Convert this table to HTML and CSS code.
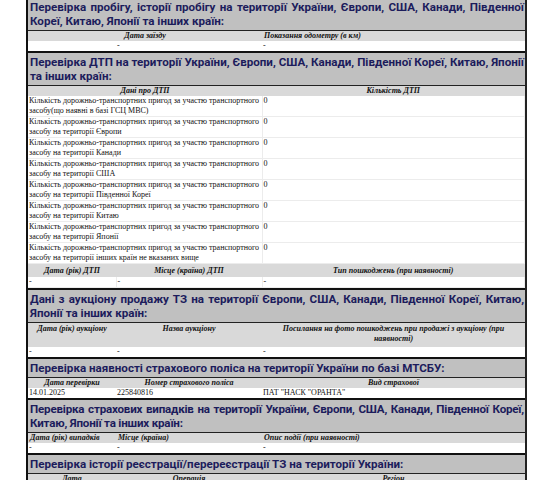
FILE: index.html
```html
<!DOCTYPE html>
<html lang="uk">
<head>
<meta charset="utf-8">
<link rel="stylesheet" href="styles.css">
</head>
<body>
<div class="doc">
  <section class="sec">
    <div class="head">Перевірка пробігу, історії пробігу на території України, Європи, США, Канади, Південної Кореї, Китаю, Японії та інших країн:</div>
    <table class="grid">
      <colgroup><col class="c1"><col class="c2"><col class="c3"></colgroup>
      <tr class="sub"><th colspan="2">Дата заїзду</th><th class="left">Показання одометру (в км)</th></tr>
      <tr class="row"><td></td><td>-</td><td>-</td></tr>
    </table>
  </section>

  <section class="sec">
    <div class="head">Перевірка ДТП на території України, Європи, США, Канади, Південної Кореї, Китаю, Японії та інших країн:</div>
    <table class="grid lines">
      <colgroup><col class="c1"><col class="c2"><col class="c3"></colgroup>
      <tr class="sub"><th colspan="2">Дані про ДТП</th><th>Кількість ДТП</th></tr>
      <tr class="row two"><td colspan="2">Кількість дорожньо-транспортних пригод за участю транспортного засобу(що наявні в базі ГСЦ МВС)</td><td>0</td></tr>
      <tr class="row two"><td colspan="2">Кількість дорожньо-транспортних пригод за участю транспортного засобу на території Європи</td><td>0</td></tr>
      <tr class="row two"><td colspan="2">Кількість дорожньо-транспортних пригод за участю транспортного засобу на території Канади</td><td>0</td></tr>
      <tr class="row two"><td colspan="2">Кількість дорожньо-транспортних пригод за участю транспортного засобу на території США</td><td>0</td></tr>
      <tr class="row two"><td colspan="2">Кількість дорожньо-транспортних пригод за участю транспортного засобу на території Південної Кореї</td><td>0</td></tr>
      <tr class="row two"><td colspan="2">Кількість дорожньо-транспортних пригод за участю транспортного засобу на території Китаю</td><td>0</td></tr>
      <tr class="row two"><td colspan="2">Кількість дорожньо-транспортних пригод за участю транспортного засобу на території Японії</td><td>0</td></tr>
      <tr class="row two"><td colspan="2">Кількість дорожньо-транспортних пригод за участю транспортного засобу на території інших країн не вказаних вище</td><td>0</td></tr>
      <tr class="sub tall"><th>Дата (рік) ДТП</th><th>Місце (країна) ДТП</th><th>Тип пошкоджень (при наявності)</th></tr>
      <tr class="row"><td>-</td><td>-</td><td>-</td></tr>
    </table>
  </section>

  <section class="sec">
    <div class="head">Дані з аукціону продажу ТЗ на території Європи, США, Канади, Південної Кореї, Китаю, Японії та інших країн:</div>
    <table class="grid">
      <colgroup><col class="c1"><col class="c2"><col class="c3"></colgroup>
      <tr class="sub top"><th>Дата (рік) аукціону</th><th>Назва аукціону</th><th>Посилання на фото пошкоджень при продажі з аукціону (при наявності)</th></tr>
      <tr class="row"><td>-</td><td>-</td><td>-</td></tr>
    </table>
  </section>

  <section class="sec">
    <div class="head">Перевірка наявності страхового полiса на території України по базі МТСБУ:</div>
    <table class="grid">
      <colgroup><col class="c1"><col class="c2"><col class="c3"></colgroup>
      <tr class="sub"><th>Дата перевірки</th><th>Номер страхового полiса</th><th>Вид страхової</th></tr>
      <tr class="row"><td>14.01.2025</td><td>225840816</td><td>ПАТ "НАСК "ОРАНТА"</td></tr>
    </table>
  </section>

  <section class="sec">
    <div class="head narrow">Перевірка страхових випадків на території України, Європи, США, Канади, Південної Кореї, Китаю, Японії та інших країн:</div>
    <table class="grid">
      <colgroup><col class="c1"><col class="c2"><col class="c3"></colgroup>
      <tr class="sub"><th class="left">Дата (рік) випадків</th><th class="left">Місце (країна)</th><th class="left">Опис події (при наявності)</th></tr>
      <tr class="row"><td>-</td><td>-</td><td>-</td></tr>
    </table>
  </section>

  <section class="sec">
    <div class="head">Перевірка історії реєстрації/перереєстрації ТЗ на території України:</div>
    <table class="grid">
      <colgroup><col class="c1"><col class="c2"><col class="c3"></colgroup>
      <tr class="sub"><th>Дата</th><th>Операція</th><th>Регіон</th></tr>
    </table>
  </section>
</div>
</body>
</html>
```
FILE: styles.css
```css
html, body {
  margin: 0;
  padding: 0;
  background: #ffffff;
}

.doc {
  width: 501px;
  margin: -2px 0 0 26px;
  border-left: 2px solid #111;
  border-right: 2px solid #222;
  box-sizing: border-box;
}

.sec {
  border-bottom: 2px solid #111;
}

.head {
  background: #c0c0c0;
  color: #1c1c5c;
  font-family: Roboto, "Liberation Sans", Arial, sans-serif;
  font-weight: bold;
  font-size: 11.6px;
  line-height: 14px;
  text-align: justify;
  padding: 2px 1px 2px 2px;
  border-bottom: 1px solid #222;
}

.head.narrow {
  letter-spacing: -0.2px;
}

.grid {
  width: 100%;
  border-collapse: collapse;
  table-layout: fixed;
  font-family: "Liberation Serif", "Times New Roman", serif;
  font-size: 8px;
  line-height: 10px;
  color: #111;
}

.c1 { width: 88px; }
.c2 { width: 146px; }
.c3 { width: auto; }

.grid th {
  background: #d9d9d9;
  font-style: italic;
  font-weight: bold;
  text-align: center;
  padding: 0 2px;
  height: 10px;
  vertical-align: top;
}

.grid th.left { text-align: left; }

.grid .sub.tall th { height: 13px; vertical-align: middle; }
.grid .sub.top th { height: 23px; vertical-align: top; padding-top: 1px; }

.grid td {
  padding: 0 1px;
  height: 10px;
  vertical-align: top;
  text-align: left;
}

.grid.lines .row td {
  border-bottom: 1px solid #ececec;
  border-right: 1px solid #ececec;
}

.grid .row.two td { height: 20px; }
```
